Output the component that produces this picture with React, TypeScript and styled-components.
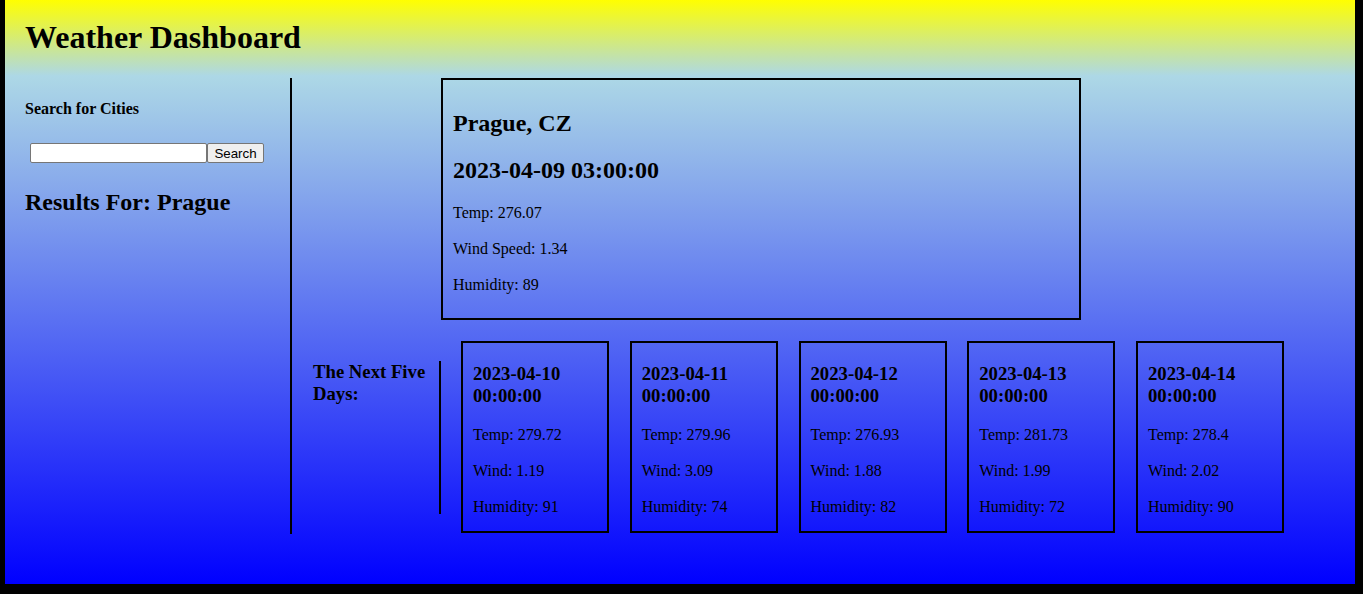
import React from "react";
import styled, { createGlobalStyle } from "styled-components";

const Global = createGlobalStyle`
  html, body { margin: 0; padding: 0; background: #000; }
  body { font-family: "Liberation Serif", "Times New Roman", serif; color: #000; }
`;

const Page = styled.div`
  margin: 0 8px 11px 5px;
  min-height: 583px;
  box-sizing: border-box;
  background: linear-gradient(#ffff00, #add8e6 13%, #0000ff);
  padding-bottom: 50px;
  display: flow-root;
`;

const Title = styled.h1`
  font-size: 32px;
  margin: 19px 0 23px 20px;
  line-height: 36px;
`;

const Layout = styled.div`
  display: flex;
  align-items: stretch;
`;

const Sidebar = styled.aside`
  width: 265px;
  padding-left: 20px;
  border-right: 2px solid #000;
  flex-shrink: 0;
`;

const SideHeading = styled.h4`
  font-size: 16px;
  margin: 22px 0 20px;
  line-height: 18px;
`;

const SearchForm = styled.form`
  display: flex;
  padding: 5px;
`;

const SearchInput = styled.input`
  width: 177px;
  height: 20px;
  box-sizing: border-box;
  border: 1px solid #767676;
  border-radius: 2px;
  padding: 1px 2px;
  margin: 0;
  background: #fff;
`;

const SearchButton = styled.button`
  font-family: "Liberation Sans", Arial, sans-serif;
  font-size: 13.33px;
  height: 20px;
  width: 57px;
  padding: 0;
  margin: 0;
  background: #efefef;
  border: 1px solid #767676;
  border-radius: 2px;
  color: #000;
`;

const Results = styled.h2`
  font-size: 24px;
  margin: 20px 0;
  line-height: 28px;
`;

const Main = styled.main`
  flex: 1;
  padding-bottom: 1px;
`;

const Current = styled.section`
  width: 640px;
  box-sizing: border-box;
  margin-left: 149px;
  border: 2px solid #000;
  padding: 10px 10px 7px;
`;

const BigHead = styled.h2`
  font-size: 24px;
  line-height: 28px;
  margin: 19px 0;
  &:first-child { margin-top: 19px; }
`;

const Line = styled.p`
  font-size: 16px;
  line-height: 20px;
  margin: 16px 0;
`;

const ForecastRow = styled.div`
  display: flex;
  align-items: center;
  padding-left: 21px;
  margin-top: 21px;
`;

const ForecastLabel = styled.div`
  width: 116px;
  padding-right: 10px;
  height: 153px;
  border-right: 2px solid #000;
  margin-right: 20px;
  flex-shrink: 0;
`;

const LabelText = styled.h3`
  font-size: 18.72px;
  line-height: 22px;
  margin: 0;
`;

const Cards = styled.div`
  display: flex;
  gap: 20.75px;
`;

const Card = styled.div`
  width: 148px;
  box-sizing: border-box;
  border: 2px solid #000;
  padding: 0 10px;
  & > p:last-child { margin-bottom: 14px; }
`;

const CardHead = styled.h3`
  font-size: 18.72px;
  line-height: 22px;
  margin: 20px 0 18px;
`;

const forecast = [
  { date: "2023-04-10", temp: "279.72", wind: "1.19", hum: "91" },
  { date: "2023-04-11", temp: "279.96", wind: "3.09", hum: "74" },
  { date: "2023-04-12", temp: "276.93", wind: "1.88", hum: "82" },
  { date: "2023-04-13", temp: "281.73", wind: "1.99", hum: "72" },
  { date: "2023-04-14", temp: "278.4", wind: "2.02", hum: "90" },
];

export default function App() {
  return (
    <>
      <Global />
      <Page>
        <Title>Weather Dashboard</Title>
        <Layout>
          <Sidebar>
            <SideHeading>Search for Cities</SideHeading>
            <SearchForm onSubmit={(e) => e.preventDefault()}>
              <SearchInput type="text" />
              <SearchButton type="submit">Search</SearchButton>
            </SearchForm>
            <Results>Results For: Prague</Results>
          </Sidebar>
          <Main>
            <Current>
              <BigHead>Prague, CZ</BigHead>
              <BigHead>2023-04-09 03:00:00</BigHead>
              <Line>Temp: 276.07</Line>
              <Line>Wind Speed: 1.34</Line>
              <Line>Humidity: 89</Line>
            </Current>
            <ForecastRow>
              <ForecastLabel>
                <LabelText>The Next Five Days:</LabelText>
              </ForecastLabel>
              <Cards>
                {forecast.map((d) => (
                  <Card key={d.date}>
                    <CardHead>
                      {d.date} 00:00:00
                    </CardHead>
                    <Line>Temp: {d.temp}</Line>
                    <Line>Wind: {d.wind}</Line>
                    <Line>Humidity: {d.hum}</Line>
                  </Card>
                ))}
              </Cards>
            </ForecastRow>
          </Main>
        </Layout>
      </Page>
    </>
  );
}
